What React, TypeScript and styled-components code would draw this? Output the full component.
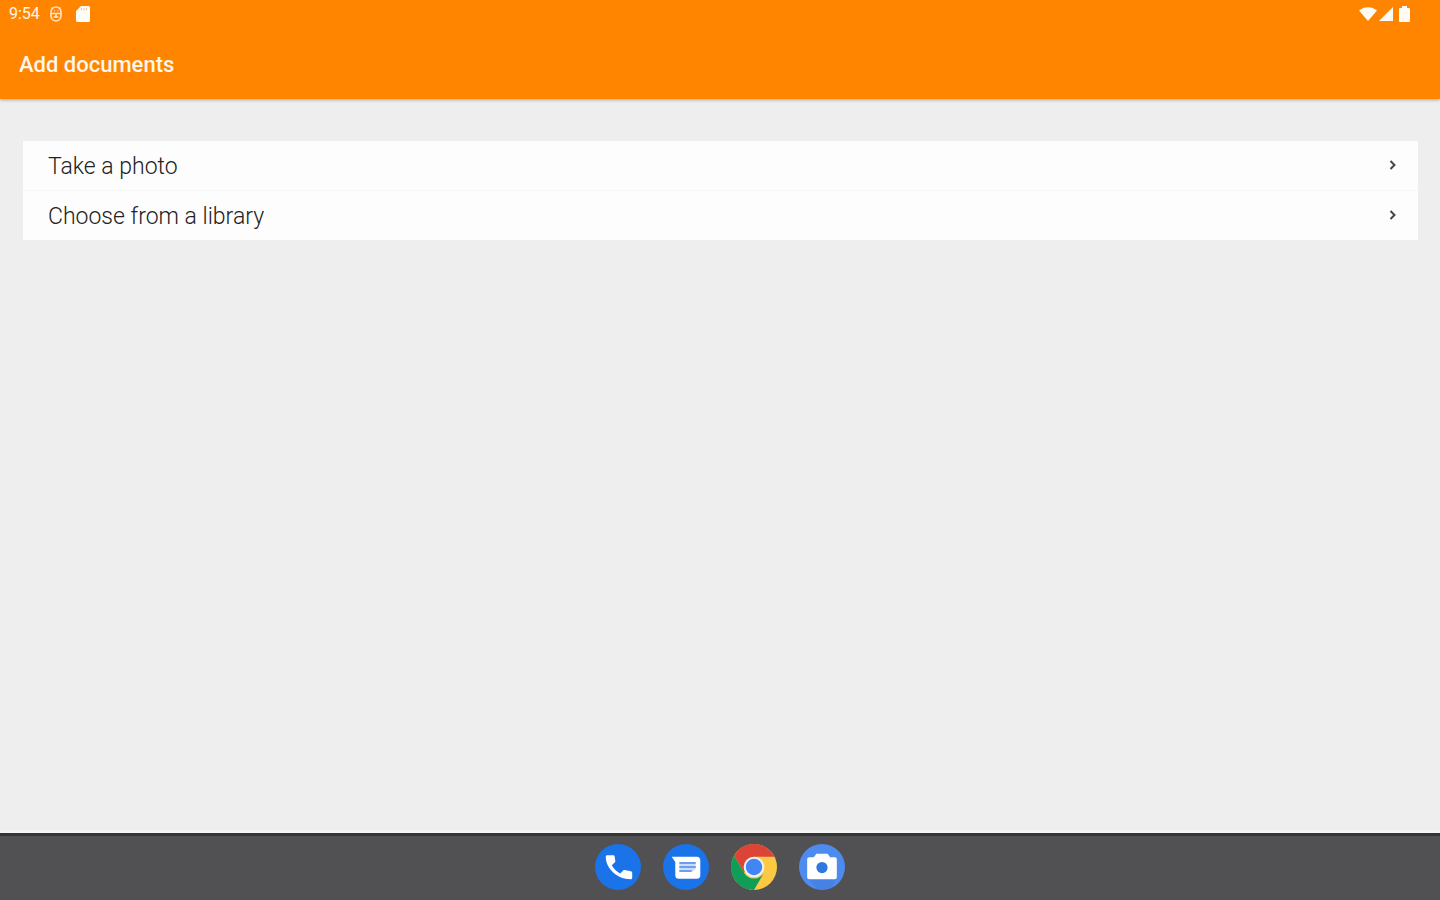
import React from "react";
import styled, { createGlobalStyle } from "styled-components";

const GlobalStyle = createGlobalStyle`
  *, *::before, *::after { box-sizing: border-box; }
  body {
    margin: 0;
    background: #eeeeee;
    font-family: Roboto, "Liberation Sans", sans-serif;
  }
`;

const Screen = styled.div`
  display: flex;
  flex-direction: column;
  min-height: 100vh;
`;

const Header = styled.header`
  background: #ff8400;
  color: #fff6ec;
  box-shadow: 0 1px 3px rgba(0, 0, 0, 0.3);
`;

const StatusBar = styled.div`
  display: flex;
  justify-content: space-between;
  align-items: center;
  height: 28px;
  padding: 0 30px 0 9px;
`;

const StatusGroup = styled.div<{ $gap: number }>`
  display: flex;
  align-items: center;
  gap: ${({ $gap }) => $gap}px;

  svg { display: block; }
`;

const Clock = styled.time`
  font-size: 16px;
  line-height: 20px;
`;

const TitleBar = styled.div`
  display: flex;
  align-items: center;
  height: 71px;
  padding: 3px 19px 0;
`;

const Title = styled.h1`
  margin: 0;
  font-size: 22px;
  line-height: 28px;
  font-weight: 500;
`;

const Main = styled.main`
  flex: 1;
  padding: 42px 22px 24px 23px;
`;

const OptionList = styled.ul`
  list-style: none;
  margin: 0;
  padding: 0;
  background: #fdfdfd;
`;

const OptionItem = styled.li`
  & + & { border-top: 1px solid #f7f7f7; }
`;

const OptionButton = styled.button`
  display: flex;
  align-items: center;
  justify-content: space-between;
  width: 100%;
  height: 49px;
  padding: 2px 20px 0 25px;
  border: 0;
  background: transparent;
  color: #222222;
  font-family: inherit;
  font-size: 23px;
  font-weight: 300;
  line-height: 28px;
  text-align: left;
  cursor: pointer;
`;

const Dock = styled.nav`
  display: flex;
  justify-content: center;
  align-items: center;
  gap: 22px;
  height: 67px;
  padding-bottom: 3px;
  border-top: 3px solid #343436;
  background: #515153;
  box-shadow: 0 -2px 2px #f8f8f8;
`;

const DockButton = styled.button`
  width: 46px;
  height: 46px;
  padding: 0;
  border: 0;
  border-radius: 50%;
  background: transparent;
  cursor: pointer;

  svg { display: block; }
`;

const DebugIcon = () => (
  <svg width="14" height="18" viewBox="0 0 14 18" fill="none" stroke="#ffe3c4" strokeWidth="1.6" aria-hidden="true">
    <path d="M2.5 2.5 4 4M11.5 2.5 10 4M2 7a5 5 0 0 1 10 0v4a5 5 0 0 1-10 0ZM2 8.5h10M7 8.5V12M4.5 12h5M5 5.8h.8M8.5 5.8h.8" />
  </svg>
);

const CardIcon = () => (
  <svg width="14" height="16" viewBox="0 0 14 16" fill="#fffdfa" aria-hidden="true">
    <path d="M5 0h7.5A1.5 1.5 0 0 1 14 1.5v13a1.5 1.5 0 0 1-1.5 1.5h-11A1.5 1.5 0 0 1 0 14.500V5Z" />
    <path d="M5.500 2v2.500M8 2v2.500M10.500 2v2.500" stroke="#ffc184" strokeWidth="1" />
  </svg>
);

const WifiIcon = () => (
  <svg width="18" height="14" viewBox="0 0 18 14" fill="#fffaf4" aria-hidden="true">
    <path d="M0 3.500C5-1 13-1 18 3.500L9 14Z" />
  </svg>
);

const SignalIcon = () => (
  <svg width="14" height="14" viewBox="0 0 14 14" fill="#fffaf4" aria-hidden="true">
    <path d="M14 0v14H0Z" />
  </svg>
);

const BatteryIcon = () => (
  <svg width="11" height="16" viewBox="0 0 11 16" fill="#fffaf4" aria-hidden="true">
    <path d="M3 0h5v2h2a1 1 0 0 1 1 1v12a1 1 0 0 1-1 1H1a1 1 0 0 1-1-1V3a1 1 0 0 1 1-1h2Z" />
  </svg>
);

const Chevron = () => (
  <svg width="10" height="14" viewBox="0 0 10 14" fill="none" stroke="#454545" strokeWidth="2" aria-hidden="true">
    <path d="M2.500 1 6.500 5 2.500 9" />
  </svg>
);

const PhoneIcon = () => (
  <svg width="46" height="46" viewBox="0 0 45 45" aria-hidden="true">
    <circle cx="22.500" cy="22.500" r="22.500" fill="#1a73e8" />
    <path
      fill="#fff"
      d="M12 11h5.800c.8 0 1.300.5 1.400 1.300l.7 4.300c.1.500-.1 1-.4 1.300l-3.100 3c2 3.700 4.500 6.100 8.200 8l3-3c.4-.4.800-.5 1.300-.4l6.200 1.100c.8.200 1.300.7 1.300 1.500V33c0 .9-.7 1.500-1.600 1.500C22 34.500 10.500 24 10.500 12.500c0-.9.600-1.500 1.500-1.500Z"
    />
  </svg>
);

const MessagesIcon = () => (
  <svg width="46" height="46" viewBox="0 0 45 45" aria-hidden="true">
    <circle cx="22.500" cy="22.500" r="22.500" fill="#1a73e8" />
    <path fill="#fff" d="M8.500 12.500h24.500a3.500 3.500 0 0 1 3.500 3.500v14.500a3.500 3.500 0 0 1-3.500 3.500H15.500a3.500 3.500 0 0 1-3.500-3.500V17.500Z" />
    <path fill="#a9c7f8" opacity=".6" d="M16 17.500h16v7l-4 3H16Z" />
    <path fill="none" stroke="#6a9ff0" strokeWidth="2" d="M16 18.500h16M16 22.500h16M16 26.500h12" />
  </svg>
);

const ChromeIcon = () => (
  <svg width="46" height="46" viewBox="0 0 48 48" aria-hidden="true">
    <circle cx="24" cy="24" r="24" fill="#fbc943" />
    <path fill="#db4437" d="M3.200 12A24 24 0 0 1 45.500 13.200H24L13.600 30Z" />
    <path fill="#0f9d58" d="M3.200 12A24 24 0 0 0 24 48L34.400 30A12 12 0 0 1 13.600 30Z" />
    <circle cx="24" cy="24" r="10.800" fill="#f1f1f1" />
    <circle cx="24" cy="24" r="8.600" fill="#4285f4" />
  </svg>
);

const CameraIcon = () => (
  <svg width="46" height="46" viewBox="0 0 45 45" aria-hidden="true">
    <circle cx="22.500" cy="22.500" r="22.500" fill="#4e8bef" />
    <path fill="#3e78d8" d="M9 34h28l-5 8a22 22 0 0 1-14 2Z" opacity=".5" />
    <path
      fill="#fff"
      d="M17 9.500h11l2.500 3.500H35a2 2 0 0 1 2 2v17.500a2 2 0 0 1-2 2H10a2 2 0 0 1-2-2V15a2 2 0 0 1 2-2h4.500Z"
    />
    <circle cx="22.500" cy="23" r="5.500" fill="#2f78df" />
  </svg>
);

const options = ["Take a photo", "Choose from a library"];

const dockApps = [
  { name: "Phone", Icon: PhoneIcon },
  { name: "Messages", Icon: MessagesIcon },
  { name: "Chrome", Icon: ChromeIcon },
  { name: "Camera", Icon: CameraIcon },
];

export default function App() {
  return (
    <>
      <GlobalStyle />
      <Screen>
        <Header>
          <StatusBar>
            <StatusGroup $gap={13}>
              <StatusGroup $gap={9}>
                <Clock>9:54</Clock>
                <DebugIcon />
              </StatusGroup>
              <CardIcon />
            </StatusGroup>
            <StatusGroup $gap={2}>
              <WifiIcon />
              <StatusGroup $gap={6}>
                <SignalIcon />
                <BatteryIcon />
              </StatusGroup>
            </StatusGroup>
          </StatusBar>
          <TitleBar>
            <Title>Add documents</Title>
          </TitleBar>
        </Header>
        <Main>
          <OptionList>
            {options.map((label) => (
              <OptionItem key={label}>
                <OptionButton type="button">
                  {label}
                  <Chevron />
                </OptionButton>
              </OptionItem>
            ))}
          </OptionList>
        </Main>
        <Dock aria-label="Apps">
          {dockApps.map(({ name, Icon }) => (
            <DockButton key={name} type="button" aria-label={name}>
              <Icon />
            </DockButton>
          ))}
        </Dock>
      </Screen>
    </>
  );
}
